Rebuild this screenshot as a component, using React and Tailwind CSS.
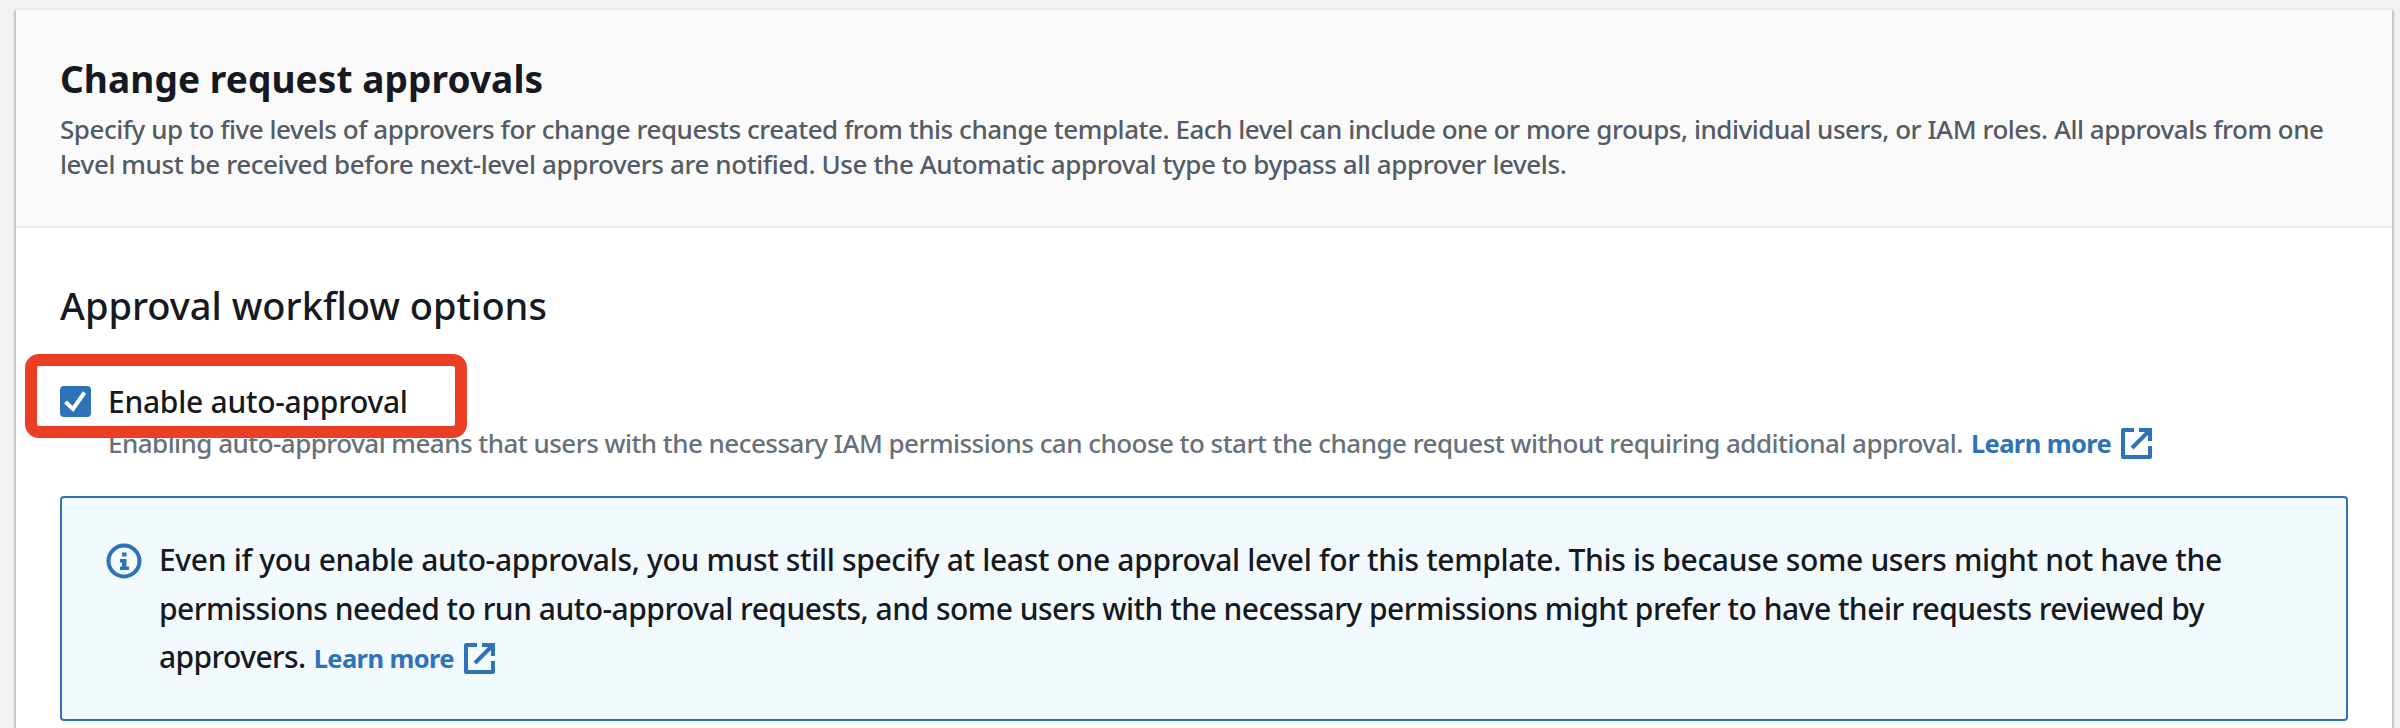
function ExternalIcon({ className }) {
  return (
    <svg viewBox="0 0 31 31" className={className} fill="none" stroke="#2e73b8" strokeWidth="4">
      <path d="M13 2H2v27h27V18" strokeLinejoin="round" />
      <path d="M18 2h11v11" />
      <path d="M29 2 11 20" />
    </svg>
  );
}

function InfoIcon() {
  return (
    <svg viewBox="0 0 36 36" className="mt-[3px] h-9 w-9 shrink-0">
      <circle cx="18" cy="18" r="15.5" fill="none" stroke="#2e73b8" strokeWidth="4" />
      <path fill="#2e73b8" d="M16 9.500h4.500v4H16zM14 16h6.500v7.500h2.500v3.500h-9v-3.500h2v-4h-2z" />
    </svg>
  );
}

function LearnMore({ className }) {
  return (
    <a className={"text-[25.5px] font-bold tracking-[-0.6px] text-[#2e73b8] " + className}>
      Learn more
      <ExternalIcon className="ml-[10px] inline-block h-[31px] w-[31px] align-[-6px]" />
    </a>
  );
}

export default function App() {
  return (
    <div className="h-[728px] w-[2400px] overflow-hidden bg-[#f2f3f3] pt-2 pl-4 font-['Noto_Sans',sans-serif] whitespace-nowrap text-[#16191f]">
      <section className="h-[740px] w-[2376px] border-t-2 border-[#eaeded] bg-white shadow-[0_2px_2px_0_rgba(0,28,36,0.3),2px_2px_2px_0_rgba(0,28,36,0.15),-2px_2px_2px_0_rgba(0,28,36,0.15)]">
        <header className="h-[218px] border-b-2 border-[#eaeded] bg-[#fafafa] pt-[46px] pl-[44px]">
          <h1 className="text-[37px] leading-[45px] font-bold tracking-[0.1px]">Change request approvals</h1>
          <p className="mt-[11px] text-[26px] leading-[35px] font-medium text-[#545b64]">
            <span className="block tracking-[-0.466px]">Specify up to five levels of approvers for change requests created from this change template. Each level can include one or more groups, individual users, or IAM roles. All approvals from one</span>
            <span className="block tracking-[-0.41px]">level must be received before next-level approvers are notified. Use the Automatic approval type to bypass all approver levels.</span>
          </p>
        </header>
        <div className="px-[44px] pt-[53px]">
          <h2 className="text-[38px] leading-[48px] font-medium">Approval workflow options</h2>
          <div className="relative mt-[50px] flex h-11 items-start">
            <span className="mt-[7px] flex h-[31px] w-[31px] rounded-[4px] bg-[#2e73b8]">
              <svg viewBox="0 0 31 31" className="h-[31px] w-[31px]" fill="none" stroke="#fff" strokeWidth="4">
                <path d="m5.500 16 7.500 7L24.500 6.500" />
              </svg>
            </span>
            <span className="ml-[17px] pt-px text-[30px] leading-[44px] font-medium tracking-[-0.27px]">Enable auto-approval</span>
            <div className="absolute top-[-25px] left-[-35.5px] z-10 h-[84px] w-[442px] rounded-[14px] border-12 border-[#eb3f25]" />
          </div>
          <p className="mt-[2px] h-[35px] pl-[48px] text-[26px] leading-9 font-medium tracking-[-0.536px] text-[#687078]">
            Enabling auto-approval means that users with the necessary IAM permissions can choose to start the change request without requiring additional approval.
            <LearnMore className="ml-2" />
          </p>
          <div className="mt-9 flex h-[225px] rounded-[4px] border-2 border-[#2e73b8] bg-[#f2fafd] pt-[38px] pl-[44px]">
            <div className="flex pt-1">
              <InfoIcon />
            </div>
            <p className="ml-[17px] text-[30px] leading-[48.5px] font-medium">
              <span className="block tracking-[-0.34px]">Even if you enable auto-approvals, you must still specify at least one approval level for this template. This is because some users might not have the</span>
              <span className="block tracking-[-0.51px]">permissions needed to run auto-approval requests, and some users with the necessary permissions might prefer to have their requests reviewed by</span>
              <span className="block tracking-[-0.6px]">
                approvers.
                <LearnMore className="ml-2" />
              </span>
            </p>
          </div>
        </div>
      </section>
    </div>
  );
}
